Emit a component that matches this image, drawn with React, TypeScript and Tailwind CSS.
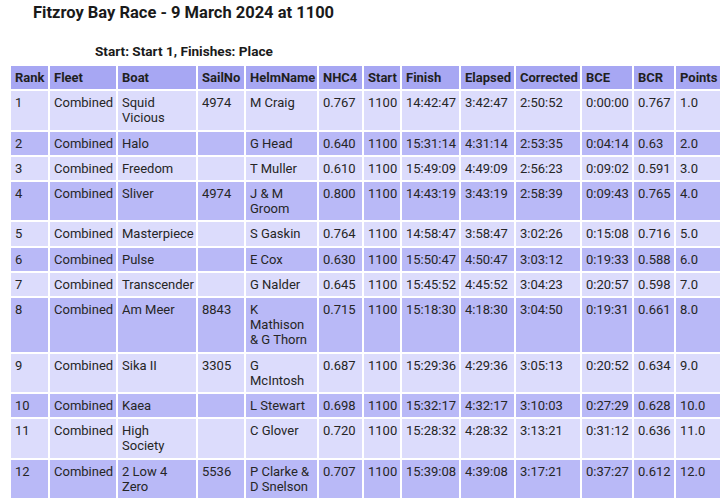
import React from "react";

const headers = ["Rank","Fleet","Boat","SailNo","HelmName","NHC4","Start","Finish","Elapsed","Corrected","BCE","BCR","Points"];
const widths = [37,66,78,46,71,43,36,57,53,64,50,40,46];

const rows: string[][] = [
  ["1","Combined","Squid Vicious","4974","M Craig","0.767","1100","14:42:47","3:42:47","2:50:52","0:00:00","0.767","1.0"],
  ["2","Combined","Halo","","G Head","0.640","1100","15:31:14","4:31:14","2:53:35","0:04:14","0.63","2.0"],
  ["3","Combined","Freedom","","T Muller","0.610","1100","15:49:09","4:49:09","2:56:23","0:09:02","0.591","3.0"],
  ["4","Combined","Sliver","4974","J & M Groom","0.800","1100","14:43:19","3:43:19","2:58:39","0:09:43","0.765","4.0"],
  ["5","Combined","Masterpiece","","S Gaskin","0.764","1100","14:58:47","3:58:47","3:02:26","0:15:08","0.716","5.0"],
  ["6","Combined","Pulse","","E Cox","0.630","1100","15:50:47","4:50:47","3:03:12","0:19:33","0.588","6.0"],
  ["7","Combined","Transcender","","G Nalder","0.645","1100","15:45:52","4:45:52","3:04:23","0:20:57","0.598","7.0"],
  ["8","Combined","Am Meer","8843","K Mathison & G Thorn","0.715","1100","15:18:30","4:18:30","3:04:50","0:19:31","0.661","8.0"],
  ["9","Combined","Sika II","3305","G McIntosh","0.687","1100","15:29:36","4:29:36","3:05:13","0:20:52","0.634","9.0"],
  ["10","Combined","Kaea","","L Stewart","0.698","1100","15:32:17","4:32:17","3:10:03","0:27:29","0.628","10.0"],
  ["11","Combined","High Society","","C Glover","0.720","1100","15:28:32","4:28:32","3:13:21","0:31:12","0.636","11.0"],
  ["12","Combined","2 Low 4 Zero","5536","P Clarke & D Snelson","0.707","1100","15:39:08","4:39:08","3:17:21","0:37:27","0.612","12.0"],
];

export default function App() {
  return (
    <div className="w-[720px] h-[503px] overflow-hidden bg-white text-[#262626]" style={{ fontFamily: "Roboto, 'Liberation Sans', sans-serif" }}>
      <div className="pl-[33px] pt-[3px] text-[16.5px] leading-[20px] font-bold text-[#1a1a1a]">Fitzroy Bay Race - 9 March 2024 at 1100</div>
      <div className="pl-[95px] pt-[20px] text-[13.6px] leading-[17px] font-bold text-[#1a1a1a]">Start: Start 1, Finishes: Place</div>
      <table className="ml-[9px] mt-[4px] table-fixed border-separate border-spacing-[2px] text-[13px] leading-[15.2px]" style={{ width: 715 }}>
        <colgroup>
          {widths.map((w, i) => (<col key={i} style={{ width: w }} />))}
        </colgroup>
        <thead>
          <tr>
            {headers.map((h) => (
              <th key={h} className="bg-[#a7a7f3] text-left font-bold px-[4px] py-[4px] align-top text-[#1f1f1f] whitespace-nowrap">{h}</th>
            ))}
          </tr>
        </thead>
        <tbody>
          {rows.map((r, i) => (
            <tr key={i} className={i % 2 === 0 ? "bg-[#dcdcfc]" : "bg-[#b9b9f7]"}>
              {r.map((c, j) => (
                <td key={j} className="px-[4px] py-[4px] align-top">{c}</td>
              ))}
            </tr>
          ))}
        </tbody>
      </table>
    </div>
  );
}
